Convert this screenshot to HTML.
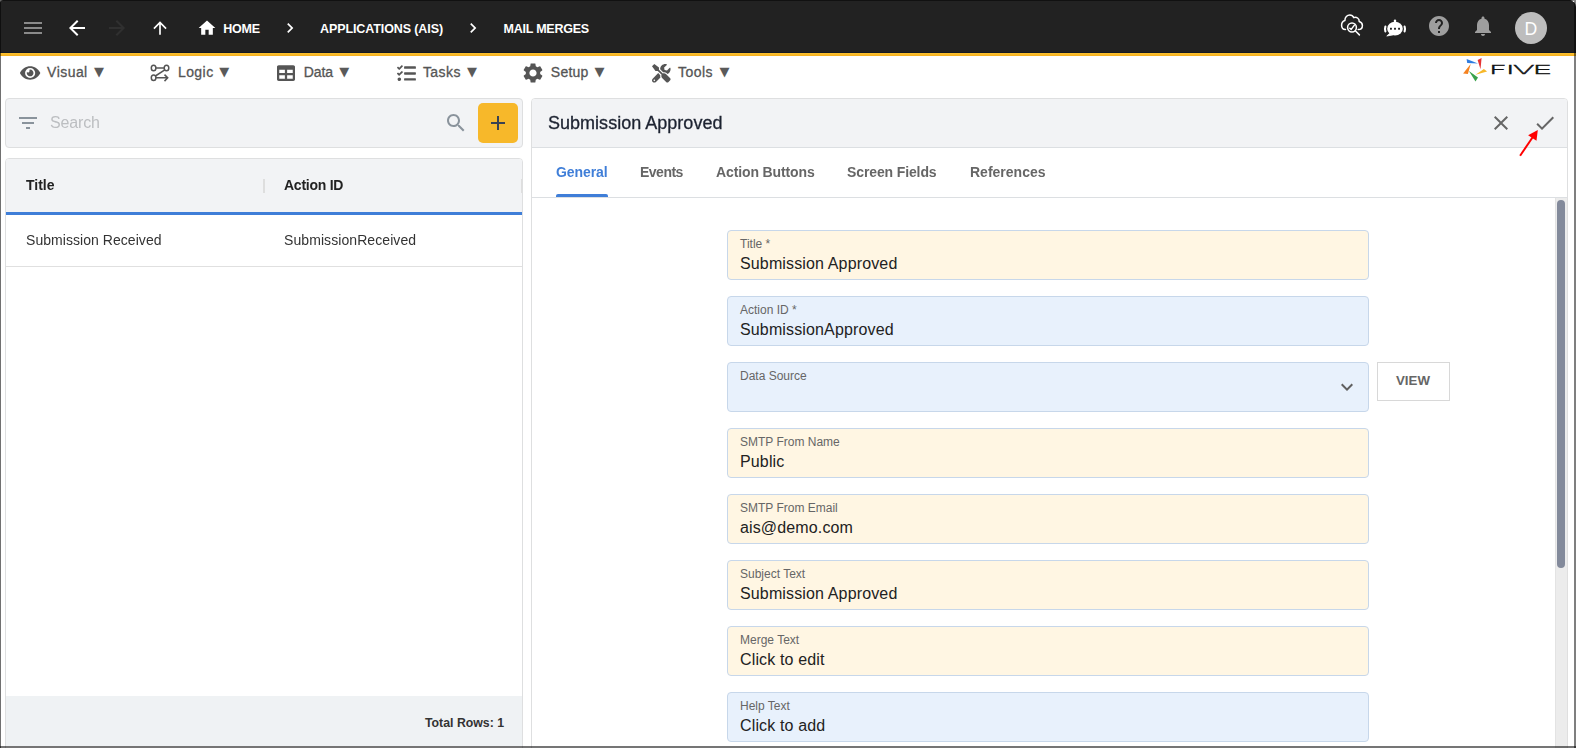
<!DOCTYPE html>
<html lang="en">
<head>
<meta charset="utf-8">
<title>Five - Mail Merges</title>
<style>
*{box-sizing:border-box;margin:0;padding:0}
html,body{width:1576px;height:748px;overflow:hidden;background:#fff}
body{font-family:"Liberation Sans",sans-serif;color:#222;position:relative}
.abs{position:absolute}
.t{position:absolute;white-space:nowrap;line-height:1}
svg{position:absolute;display:block;overflow:visible}
/* header */
#hdr{left:0;top:0;width:1576px;height:53px;background:#222;border-bottom:1px solid #141a24}
#band{left:0;top:53px;width:1576px;height:3px;background:linear-gradient(#fdc230,#f4b01f)}
.bc{color:#fff;font-weight:bold;font-size:12.500px}
.mi{color:#555;font-weight:normal;font-size:14px;-webkit-text-stroke:0.3px #555;letter-spacing:0.45px}
.tri{font-family:"DejaVu Sans",sans-serif;font-size:13px;color:#5a5a5a}
/* frame */
#fl{left:0;top:0;width:1px;height:748px;background:rgba(0,0,0,0.56)}
#fr{left:1574px;top:0;width:2px;height:748px;background:rgba(0,0,0,0.5)}
#ft{left:0;top:0;width:1576px;height:1px;background:rgba(0,0,0,0.5)}
#fb{left:0;top:746px;width:1576px;height:2px;background:rgba(0,0,0,0.54)}
/* left */
#sbox{left:5px;top:98px;width:518px;height:50px;background:#f2f3f5;border:1px solid #dedfe0;border-radius:4px}
#plus{left:478px;top:103px;width:40px;height:40px;background:#f7b82a;border-radius:5px}
#tbl{left:5px;top:158px;width:518px;height:592px;background:#fff;border:1px solid #dedfe0;border-radius:4px 4px 0 0;overflow:hidden}
#th{left:0;top:0;width:516px;height:53px;background:#f2f3f5}
#thl{left:0;top:53px;width:516px;height:3px;background:#3f7ed8}
#row1{left:0;top:56px;width:516px;height:52px;border-bottom:1px solid #e0e0e0}
#tf{left:0;top:537px;width:516px;height:50px;background:#eff2f4}
/* right */
#rp{left:531px;top:98px;width:1037px;height:660px;background:#fff;border:1px solid #dedfe0;border-radius:4px 4px 0 0;overflow:hidden}
#rph{left:0;top:0;width:1035px;height:49px;background:#f2f3f5;border-bottom:1px solid #dcdfe2}
#tabs{left:0;top:49px;width:1035px;height:50px;border-bottom:1px solid #dcdfe2}
.tab{color:#666;font-weight:bold;font-size:14px}
.fld{position:absolute;left:727px;width:642px;height:50px;border:1px solid #c7d7ea;border-radius:4px}
.fy{background:#fff6e3}
.fb{background:#e8f1fc}
.lbl{position:absolute;left:12px;top:7px;font-size:12px;color:#666;white-space:nowrap;line-height:1}
.val{position:absolute;left:12px;top:25px;font-size:16px;letter-spacing:0.140px;color:#222;white-space:nowrap;line-height:1}
</style>
</head>
<body>
<div id="hdr" class="abs"></div>
<div id="band" class="abs"></div>

<!-- header icons -->
<svg style="left:21px;top:16px" width="24" height="24" viewBox="0 0 24 24"><path fill="#8a8a8a" d="M3 18h18v-2H3v2zm0-5h18v-2H3v2zm0-7v2h18V6H3z"/></svg>
<svg style="left:65px;top:16px" width="24" height="24" viewBox="0 0 24 24"><path fill="#fff" d="M20 11H7.83l5.59-5.59L12 4l-8 8 8 8 1.41-1.41L7.83 13H20v-2z"/></svg>
<svg style="left:105px;top:16px" width="24" height="24" viewBox="0 0 24 24"><path fill="#303030" d="M12 4l-1.41 1.41L16.170 11H4v2h12.170l-5.580 5.590L12 20l8-8z"/></svg>
<svg style="left:150px;top:18px" width="20" height="20" viewBox="0 0 24 24"><path fill="#fff" d="M4 12l1.410 1.410L11 7.830V20h2V7.830l5.580 5.590L20 12l-8-8-8 8z"/></svg>
<svg style="left:197px;top:18px" width="20" height="20" viewBox="0 0 24 24"><path fill="#fff" d="M10 20v-6h4v6h5v-8h3L12 3 2 12h3v8z"/></svg>
<div class="t bc" id="bc1" style="left:223.3px;top:22.7px;letter-spacing:-0.25px">HOME</div>
<svg style="left:280px;top:18px" width="20" height="20" viewBox="0 0 24 24"><path fill="#fff" d="M10 6L8.590 7.410 13.170 12l-4.580 4.590L10 18l6-6z"/></svg>
<div class="t bc" id="bc2" style="left:320px;top:22.7px;letter-spacing:-0.1px">APPLICATIONS (AIS)</div>
<svg style="left:463px;top:18px" width="20" height="20" viewBox="0 0 24 24"><path fill="#fff" d="M10 6L8.590 7.410 13.170 12l-4.580 4.590L10 18l6-6z"/></svg>
<div class="t bc" id="bc3" style="left:503.6px;top:22.7px;letter-spacing:-0.25px">MAIL MERGES</div>


<!-- menu icons -->
<svg style="left:19.800px;top:64px" width="20.250" height="18" viewBox="0 0 576 512"><path fill="#555" d="M572.520 241.400C518.290 135.590 410.930 64 288 64S57.680 135.640 3.480 241.410a32.350 32.350 0 0 0 0 29.190C57.710 376.410 165.070 448 288 448s230.320-71.640 284.520-177.410a32.350 32.350 0 0 0 0-29.190zM288 400a144 144 0 1 1 144-144 143.930 143.930 0 0 1-144 144zm0-240a95.310 95.310 0 0 0-25.310 3.790 47.850 47.850 0 0 1-66.900 66.900A95.780 95.780 0 1 0 288 160z"/></svg>
<svg style="left:148px;top:62px" width="24" height="24" viewBox="0 0 24 24" fill="none" stroke="#555" stroke-width="1.500"><ellipse cx="5.600" cy="5.950" rx="2.300" ry="2.750"/><ellipse cx="18.500" cy="5.950" rx="2.300" ry="2.750"/><ellipse cx="5.600" cy="15.850" rx="2.300" ry="2.750"/><path d="M7.900 5.950H16.200M16.800 7.900L7.400 14M7.900 15.850H19.500M16.500 12.600L19.700 15.850L16.500 19.100"/></svg>
<svg style="left:277px;top:64px" width="18" height="18" viewBox="0 0 512 512"><path fill="#555" d="M464 32H48C21.490 32 0 53.490 0 80v352c0 26.510 21.490 48 48 48h416c26.510 0 48-21.490 48-48V80c0-26.510-21.490-48-48-48zM224 416H64v-96h160v96zm0-160H64v-96h160v96zm224 160H288v-96h160v96zm0-160H288v-96h160v96z"/></svg>
<svg style="left:396.7px;top:63.7px" width="18.9" height="18.9" viewBox="0 0 512 512"><path fill="#555" d="M139.610 35.500a12 12 0 0 0-17 0L58.930 98.810l-22.700-22.120a12 12 0 0 0-17 0L3.530 92.410a12 12 0 0 0 0 17l47.590 47.400a12.780 12.780 0 0 0 17.610 0l15.590-15.620L156.520 69a12.090 12.090 0 0 0 .09-17zm0 159.190a12 12 0 0 0-17 0l-63.680 63.720-22.700-22.100a12 12 0 0 0-17 0L3.530 252a12 12 0 0 0 0 17L51 316.500a12.770 12.770 0 0 0 17.600 0l15.700-15.690 72.200-72.220a12 12 0 0 0 .09-16.900zM64 368c-26.490 0-48.590 21.500-48.590 48S37.530 464 64 464a48 48 0 0 0 0-96zm432 16H208a16 16 0 0 0-16 16v32a16 16 0 0 0 16 16h288a16 16 0 0 0 16-16v-32a16 16 0 0 0-16-16zm0-320H208a16 16 0 0 0-16 16v32a16 16 0 0 0 16 16h288a16 16 0 0 0 16-16V80a16 16 0 0 0-16-16zm0 160H208a16 16 0 0 0-16 16v32a16 16 0 0 0 16 16h288a16 16 0 0 0 16-16v-32a16 16 0 0 0-16-16z"/></svg>
<svg style="left:521px;top:61px" width="24" height="24" viewBox="0 0 24 24"><path fill="#555" d="M19.140 12.940c.04-.3.060-.61.060-.94 0-.32-.02-.64-.07-.94l2.030-1.580c.18-.14.230-.41.120-.61l-1.920-3.320c-.12-.22-.37-.29-.59-.22l-2.390.96c-.5-.38-1.030-.7-1.620-.94l-.36-2.540c-.04-.24-.24-.41-.48-.41h-3.840c-.24 0-.43.170-.47.410l-.36 2.540c-.59.240-1.130.57-1.620.94l-2.390-.96c-.22-.08-.47 0-.59.220L2.740 8.870c-.12.210-.08.470.12.610l2.030 1.580c-.05.300-.09.630-.09.940s.02.640.07.940l-2.030 1.580c-.18.140-.23.410-.12.610l1.920 3.320c.12.220.37.290.59.220l2.390-.96c.5.380 1.030.7 1.620.94l.36 2.540c.05.240.24.410.48.410h3.840c.24 0 .44-.17.470-.41l.36-2.540c.59-.24 1.130-.56 1.620-.94l2.390.96c.22.080.47 0 .59-.22l1.920-3.320c.12-.22.070-.47-.12-.61l-2.010-1.580zM12 15.600c-1.980 0-3.600-1.620-3.600-3.600s1.620-3.600 3.600-3.600 3.600 1.620 3.600 3.600-1.620 3.600-3.600 3.600z"/></svg>
<svg style="left:651.5px;top:63.8px" width="18.6" height="18.6" viewBox="0 0 512 512"><path fill="#555" d="M501.100 395.700L384 278.600c-23.100-23.100-57.600-27.600-85.400-13.900L192 158.100V96L64 0 0 64l96 128h62.100l106.600 106.600c-13.600 27.800-9.200 62.300 13.900 85.400l117.100 117.100c14.600 14.600 38.200 14.600 52.700 0l52.700-52.700c14.500-14.600 14.500-38.200 0-52.700zM331.700 225c28.300 0 54.900 11 74.900 31l19.400 19.400c15.800-6.900 30.800-16.500 43.800-29.500 37.100-37.100 49.700-89.300 37.900-136.700-2.200-9-13.500-12.100-20.100-5.500l-74.400 74.400-67.900-11.300L334 98.900l74.400-74.400c6.600-6.600 3.400-17.900-5.700-20.200-47.400-11.700-99.600.9-136.600 37.900-28.500 28.500-41.900 66.100-41.200 103.600l82.100 82.100c8.100-1.900 16.500-2.900 24.700-2.900zm-103.900 82l-56.700-56.700L18.700 402.800c-25 25-25 65.500 0 90.500s65.500 25 90.500 0l123.600-123.600c-7.600-19.900-9.900-41.600-5-62.700zM64 472c-13.200 0-24-10.800-24-24 0-13.300 10.700-24 24-24s24 10.700 24 24c0 13.200-10.700 24-24 24z"/></svg>

<!-- header right icons -->
<svg style="left:1332px;top:8px" width="40" height="36" viewBox="0 0 40 36" fill="none" stroke="#fff" stroke-width="1.500" stroke-linecap="round" stroke-linejoin="round"><path d="M13.5 21.6C10.8 21.6 9.6 19.3 9.6 17.3C9.6 14.6 11.3 13 12.9 12.5C12.8 9.2 15.2 7 17.8 7C19.6 7 21 8 21.8 9.6C22.9 9 24.4 9.100 25.6 10C26.8 10.9 27.3 12.2 27.2 13.5C29.200 14 30.4 15.600 30.4 17.5C30.4 19.800 28.7 21.6 26.2 21.6"/><circle cx="20" cy="19.500" r="4.400"/><path d="M23.300 22.800L27.400 26.900M17.800 20.200L19.200 21.400L22.400 17.100"/></svg>
<svg style="left:1375px;top:8px" width="40" height="36" viewBox="0 0 40 36"><ellipse cx="20" cy="20.700" rx="7.800" ry="6.900" fill="#fff"/><path d="M20 12.600V15" stroke="#fff" stroke-width="2.300" stroke-linecap="round"/><path d="M14.500 25.500L11.800 28 L17.500 27Z" fill="#fff" stroke="#fff" stroke-width="0.800" stroke-linejoin="round"/><path d="M10.4 18.6C9.9 20 9.9 22 10.4 23.4M29.6 18.6C30.1 20 30.1 22 29.6 23.4" stroke="#fff" stroke-width="2.1" fill="none" stroke-linecap="round"/><rect x="15" y="19.800" width="1.900" height="1.900" fill="#222"/><rect x="19.050" y="19.800" width="1.900" height="1.900" fill="#222"/><rect x="23.100" y="19.800" width="1.900" height="1.900" fill="#222"/></svg>
<svg style="left:1427px;top:14px" width="24" height="24" viewBox="0 0 24 24"><path fill="#9e9e9e" d="M12 2C6.480 2 2 6.480 2 12s4.480 10 10 10 10-4.480 10-10S17.520 2 12 2zm1 17h-2v-2h2v2zm2.070-7.750l-.9.920C13.450 12.900 13 13.500 13 15h-2v-.5c0-1.100.45-2.100 1.170-2.830l1.240-1.260c.37-.36.590-.86.590-1.410 0-1.100-.9-2-2-2s-2 .9-2 2H8c0-2.210 1.790-4 4-4s4 1.790 4 4c0 .88-.36 1.680-.93 2.250z"/></svg>
<svg style="left:1471px;top:13.600px" width="24" height="24" viewBox="0 0 24 24"><path fill="#9e9e9e" d="M12 22c1.100 0 2-.9 2-2h-4c0 1.100.89 2 2 2zm6-6v-5c0-3.070-1.640-5.640-4.500-6.320V4c0-.83-.67-1.500-1.500-1.500s-1.500.67-1.500 1.500v.68C7.630 5.360 6 7.920 6 11v5l-2 2v1h16v-1l-2-2z"/></svg>
<div class="abs" style="left:1515px;top:12px;width:32px;height:32px;border-radius:50%;background:#bdbdbd"></div>
<div class="t" id="av" style="left:1515px;top:18.8px;width:32px;text-align:center;font-size:19px;color:#fff;transform:scaleX(0.93)">D</div>

<!-- logo -->
<svg style="left:1460px;top:56px" width="100" height="30" viewBox="1460 56 100 30"><path fill="#2f7de1" d="M1466.600 59L1467.200 63L1478 63.600Z"/><path fill="#e53434" d="M1481.600 58L1477.600 60L1480.500 69.200Z"/><path fill="#f7b82a" d="M1487.100 71.400L1483.900 68.900L1475.500 74.700Z"/><path fill="#3aa24b" d="M1475.500 81.400L1478 77.600L1468.900 70.900Z"/><path fill="#f58220" d="M1463.100 73.400L1467.900 74L1470.700 63.900Z"/><text id="five" transform="scale(2.5 1)" y="74.4" x="595.36 602.20 605.12 612.88" font-family="DejaVu Sans, sans-serif" font-weight="200" font-size="12.9" fill="#111" stroke="#111" stroke-width="0.6" vector-effect="non-scaling-stroke">FIVE</text></svg>
<!-- menu bar -->
<div class="t mi" id="m1" style="left:47.1px;top:65.4px">Visual</div><div class="t tri" id="m1t" style="left:94.1px;top:65.2px">▼</div>
<div class="t mi" id="m2" style="left:177.9px;top:65.4px">Logic</div><div class="t tri" id="m2t" style="left:219.2px;top:65.2px">▼</div>
<div class="t mi" id="m3" style="left:303.7px;top:65.4px;letter-spacing:-0.1px">Data</div><div class="t tri" id="m3t" style="left:339.2px;top:65.2px">▼</div>
<div class="t mi" id="m4" style="left:422.9px;top:65.4px">Tasks</div><div class="t tri" id="m4t" style="left:467.1px;top:65.2px">▼</div>
<div class="t mi" id="m5" style="left:550.8px;top:65.4px;letter-spacing:0.25px">Setup</div><div class="t tri" id="m5t" style="left:594.5px;top:65.2px">▼</div>
<div class="t mi" id="m6" style="left:678.0px;top:65.4px">Tools</div><div class="t tri" id="m6t" style="left:719.4px;top:65.2px">▼</div>

<!-- left panel -->
<div id="sbox" class="abs"></div>
<svg style="left:16px;top:111px" width="24" height="24" viewBox="0 0 24 24"><path fill="#8a939c" d="M10 18h4v-2h-4v2zM3 6v2h18V6H3zm3 7h12v-2H6v2z"/></svg>
<div class="t" id="srch" style="left:50.2px;top:114.5px;font-size:16px;color:#bcbec1;will-change:transform;letter-spacing:-0.15px">Search</div>
<svg style="left:444px;top:111px" width="24" height="24" viewBox="0 0 24 24"><path fill="#8a939c" d="M15.500 14h-.790l-.280-.270C15.410 12.590 16 11.110 16 9.500 16 5.910 13.090 3 9.500 3S3 5.910 3 9.500 5.910 16 9.500 16c1.610 0 3.090-.590 4.230-1.570l.270.280v.790l5 4.990L20.490 19l-4.990-5zm-6 0C7.010 14 5 11.990 5 9.500S7.010 5 9.500 5 14 7.010 14 9.500 11.990 14 9.500 14z"/></svg>
<div id="plus" class="abs"></div>
<svg style="left:486px;top:111px" width="24" height="24" viewBox="0 0 24 24"><path fill="#3a4252" d="M19 13h-6v6h-2v-6H5v-2h6V5h2v6h6v2z"/></svg>

<div id="tbl" class="abs">
  <div id="th" class="abs"></div>
  <div id="thl" class="abs"></div>
  <div class="abs" style="left:257px;top:20px;width:2px;height:14px;background:#dedede"></div>
  <div class="abs" style="left:515px;top:20px;width:2px;height:14px;background:#dedede"></div>
  <div class="t" id="h1" style="left:20.4px;top:18.7px;font-size:14px;font-weight:bold;color:#222;will-change:transform">Title</div>
  <div class="t" id="h2" style="left:277.7px;top:18.7px;font-size:14px;font-weight:bold;color:#222;letter-spacing:-0.25px;will-change:transform">Action ID</div>
  <div id="row1" class="abs"></div>
  <div class="t" id="c1" style="left:20px;top:74px;font-size:14px;color:#333;letter-spacing:0.05px;will-change:transform">Submission Received</div>
  <div class="t" id="c2" style="left:278px;top:74px;font-size:14px;color:#333;letter-spacing:0.08px;will-change:transform">SubmissionReceived</div>
  <div id="tf" class="abs"></div>
  <div class="t" id="tr" style="left:419px;top:557.6px;font-size:12.3px;font-weight:bold;color:#333">Total Rows: 1</div>
</div>

<!-- right panel -->
<div id="rp" class="abs">
  <div id="rph" class="abs"></div>
  <div id="tabs" class="abs"></div>
</div>
<div class="t" id="ttl" style="left:548.4px;top:114.4px;font-size:18px;color:#1c2230;letter-spacing:0.02px;will-change:transform;-webkit-text-stroke:0.3px #1c2230">Submission Approved</div>
<svg style="left:1489px;top:111px" width="24" height="24" viewBox="0 0 24 24"><path fill="#666" d="M19 6.410L17.590 5 12 10.590 6.410 5 5 6.410 10.590 12 5 17.590 6.410 19 12 13.410 17.590 19 19 17.590 13.410 12z"/></svg>
<svg style="left:1533px;top:111px" width="24" height="24" viewBox="0 0 24 24"><path fill="#666" d="M9 16.170L4.830 12l-1.420 1.410L9 19 21 7l-1.410-1.410z"/></svg>
<svg style="left:1510px;top:125px" width="40" height="40" viewBox="1510 125 40 40"><path d="M1520.100 155.800L1532.800 137" stroke="#f00" stroke-width="2" fill="none"/><path fill="#f00" d="M1537.800 130L1528.100 135.300L1536.500 140.800Z"/></svg>

<div class="t tab" id="t1" style="left:556px;top:165.3px;color:#3f7ed8;letter-spacing:-0.08px;will-change:transform">General</div>
<div class="abs" style="left:556px;top:194px;width:52px;height:3px;background:#3f7ed8;border-radius:2px 2px 0 0"></div>
<div class="t tab" id="t2" style="left:640px;top:165.3px;letter-spacing:-0.5px;will-change:transform">Events</div>
<div class="t tab" id="t3" style="left:716.3px;top:165.3px;letter-spacing:-0.12px;will-change:transform">Action Buttons</div>
<div class="t tab" id="t4" style="left:847.4px;top:165.3px;letter-spacing:-0.12px;will-change:transform">Screen Fields</div>
<div class="t tab" id="t5" style="left:969.5px;top:165.3px;will-change:transform">References</div>

<div class="fld fy" style="top:230px"><div class="lbl" id="l1">Title *</div><div class="val" id="v1">Submission Approved</div></div>
<div class="fld fb" style="top:296px"><div class="lbl" id="l2">Action ID *</div><div class="val" id="v2">SubmissionApproved</div></div>
<div class="fld fb" style="top:362px"><div class="lbl" id="l3">Data Source</div></div>
<div class="fld fy" style="top:428px"><div class="lbl" id="l4">SMTP From Name</div><div class="val" id="v3">Public</div></div>
<div class="fld fy" style="top:494px"><div class="lbl" id="l5">SMTP From Email</div><div class="val" id="v4">ais@demo.com</div></div>
<div class="fld fy" style="top:560px"><div class="lbl" id="l6">Subject Text</div><div class="val" id="v5">Submission Approved</div></div>
<div class="fld fy" style="top:626px"><div class="lbl" id="l7">Merge Text</div><div class="val" id="v6">Click to edit</div></div>
<div class="fld fb" style="top:692px"><div class="lbl" id="l8">Help Text</div><div class="val" id="v7">Click to add</div></div>

<svg style="left:1335px;top:375px" width="24" height="24" viewBox="0 0 24 24"><path fill="#606060" d="M16.590 8.590L12 13.170 7.410 8.590 6 10l6 6 6-6z"/></svg>
<div class="abs" style="left:1377px;top:362px;width:73px;height:39px;border:1px solid #d8d8d8;background:#fff"></div>
<div class="t" id="view" style="left:1396px;top:373.6px;font-size:13.3px;font-weight:bold;color:#666">VIEW</div>

<!-- scrollbar -->
<div class="abs" style="left:1555px;top:198px;width:13px;height:550px;background:#ececec;border-left:1px solid #e3e3e3;border-right:1px solid #dfdfdf"></div>
<div class="abs" style="left:1557px;top:200px;width:8px;height:368px;background:#838a9b;border-radius:4px"></div>

<div id="fl" class="abs"></div><div id="fr" class="abs"></div><div id="ft" class="abs"></div><div id="fb" class="abs"></div>
<svg style="left:1566px;top:0" width="10" height="10" viewBox="0 0 10 10"><path fill="#858585" d="M4.500 0H10V7C9.700 3.500 8 1 4.500 0Z"/><circle cx="7.400" cy="1.400" r="0.700" fill="#eee"/></svg>
<svg style="left:0;top:0" width="6" height="4" viewBox="0 0 6 4"><path fill="#666" d="M0 0H3.500C1.500 0.300 0.500 1 0 2.500Z"/></svg>
</body>
</html>
